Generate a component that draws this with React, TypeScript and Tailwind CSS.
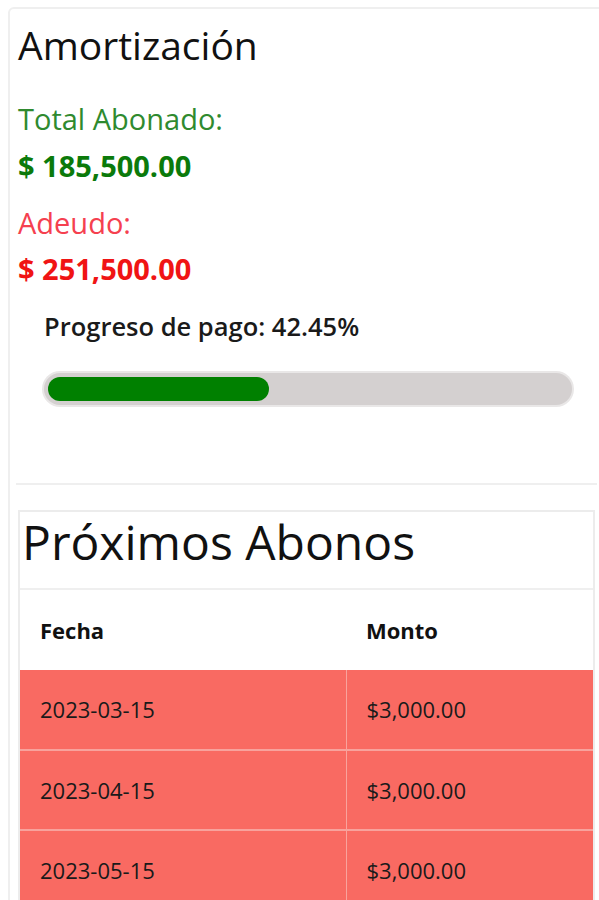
const pagos = [
  { fecha: '2023-03-15', monto: '$3,000.00' },
  { fecha: '2023-04-15', monto: '$3,000.00' },
  { fecha: '2023-05-15', monto: '$3,000.00' },
];

const App = () => {
  const progreso = 42.45;

  return (
    <div className="w-full h-[900px] overflow-hidden bg-white pt-[7px] pl-[8px] font-['Open_Sans',sans-serif] text-[#111]">
      <div className="w-[620px] border-2 border-[#efefef] rounded-md pl-[8px] pt-[13px] pb-10">
        <h2 className="text-[39px] leading-[46px] font-normal text-[#111]">Amortización</h2>

        <p className="mt-[34px] text-[29px] leading-[34px] text-[#2f8a2f]">Total Abonado:</p>
        <p className="mt-[14px] text-[29px] leading-[32px] font-bold text-[#0b7a0b]">$ 185,500.00</p>

        <p className="mt-[24px] text-[29px] leading-[34px] text-[#f5404f]">Adeudo:</p>
        <p className="mt-[13px] text-[29px] leading-[32px] font-bold text-[#f01414]">$ 251,500.00</p>

        {/* Progress */}
        <div className="pl-[26px]">
          <p className="mt-[26px] text-[25.5px] leading-[30px] font-semibold text-[#1a1a1a]">
            Progreso de pago: {progreso}%
          </p>
          <div className="mt-[32px] w-[528px] h-8 rounded-full bg-[#d4d0d0] p-1 ring-2 ring-[#e9e7e7]">
            <div className="h-full rounded-full bg-[#008000]" style={{ width: `${progreso}%` }} />
          </div>
        </div>

        <hr className="mt-[78px] -ml-[2px] w-[581px] border-0 h-[2px] bg-[#efefef]" />

        {/* Próximos abonos */}
        <div className="mt-[25px] w-[577px] border-2 border-[#ececec]">
          <h3 className="pl-[2px] pt-[2px] pb-[18px] text-[48px] leading-[56px] font-normal text-[#111] border-b-2 border-[#efefef]">
            Próximos Abonos
          </h3>
          <table className="w-full border-collapse text-[22px]">
            <thead>
              <tr className="h-[80px]">
                <th className="w-[326px] pl-[20px] text-left font-bold">Fecha</th>
                <th className="pl-[20px] text-left font-bold">Monto</th>
              </tr>
            </thead>
            <tbody>
              {pagos.map((p) => (
                <tr key={p.fecha} className="h-[80px] bg-[#f96a62] border-b-2 border-[#f8a29c]">
                  <td className="pl-[20px] border-r border-[#f9a39d] text-[#1a1a1a]">{p.fecha}</td>
                  <td className="pl-[20px] text-[#1a1a1a]">{p.monto}</td>
                </tr>
              ))}
            </tbody>
          </table>
        </div>
      </div>
    </div>
  );
};

export default App;
